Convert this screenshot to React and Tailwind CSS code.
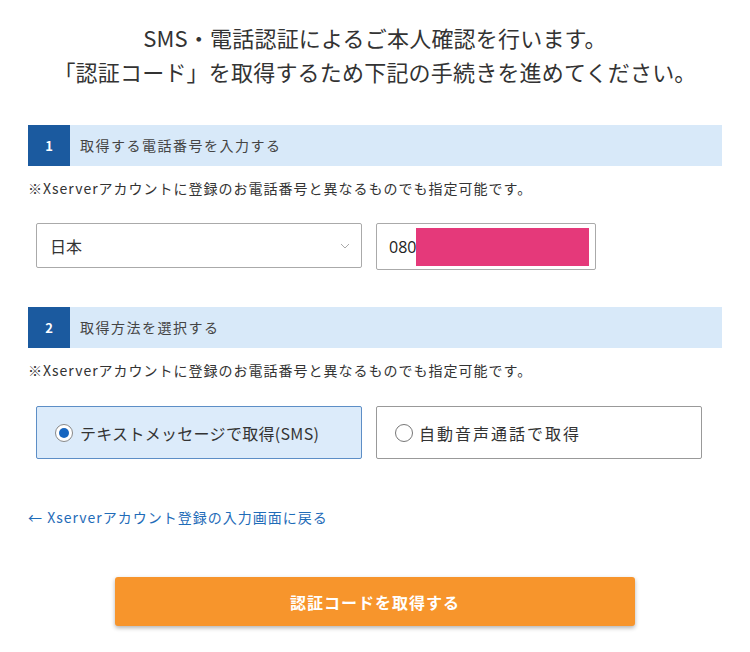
// App: SMS / phone verification step
import React, { useState } from 'react';

const FONT = { fontFamily: '"Noto Sans CJK JP", "Noto Sans", sans-serif' };

function StepHeader({ num, label }) {
  return (
    <div className="flex h-[41px] bg-[#d8e9f9]">
      <div className="flex w-[42px] items-center justify-center bg-[#1b5a9f] text-[13px] font-bold text-white">{num}</div>
      <div className="flex items-center pl-[10px] text-[14px] tracking-[1.5px] text-[#444]">{label}</div>
    </div>
  );
}

function Radio({ checked }) {
  return (
    <span className={`flex h-[18px] w-[18px] shrink-0 items-center justify-center rounded-full border ${checked ? 'border-[#888] bg-white' : 'border-[#777] bg-white'}`}>
      {checked && <span className="h-[10px] w-[10px] rounded-full bg-[#1766c0]" />}
    </span>
  );
}

export default function App() {
  const [method, setMethod] = useState('sms');

  return (
    <div className="w-[750px] h-[652px] bg-white text-[#333]" style={FONT}>
      <div className="pt-[20px] text-center text-[22px] leading-[34px] tracking-[0.2px] text-[#333]">
        <p>SMS・電話認証によるご本人確認を行います。</p>
        <p>「認証コード」を取得するため下記の手続きを進めてください。</p>
      </div>

      <div className="mx-[28px] mt-[37px]">
        <StepHeader num="1" label="取得する電話番号を入力する" />
        <p className="mt-[12px] text-[14px] leading-[20px] tracking-[1px] text-[#333]">※Xserverアカウントに登録のお電話番号と異なるものでも指定可能です。</p>

        <div className="mt-[25px] flex gap-[14px] pl-[8px]">
          <div className="flex h-[45px] w-[326px] items-center justify-between rounded-[2px] border border-[#aaa] pl-[13px] pr-[10px] text-[16px]">
            <span>日本</span>
            <svg width="12" height="8" viewBox="0 0 12 8" fill="none" stroke="#aaa" strokeWidth="1">
              <path d="M2 2l4 4 4-4" />
            </svg>
          </div>
          <div className="flex h-[47px] w-[220px] items-center rounded-[2px] border border-[#aaa] pl-[12px] pr-[6px]">
            <span className="text-[16px] text-[#222]" style={{ fontFamily: '"Open Sans", sans-serif' }}>080</span>
            <div className="h-[38px] flex-1 bg-[#e5397a]" />
          </div>
        </div>

        <div className="mt-[37px]">
          <StepHeader num="2" label="取得方法を選択する" />
        </div>
        <p className="mt-[12px] text-[14px] leading-[20px] tracking-[1px] text-[#333]">※Xserverアカウントに登録のお電話番号と異なるものでも指定可能です。</p>

        <div className="mt-[26px] flex gap-[14px] pl-[8px]">
          <button
            onClick={() => setMethod('sms')}
            className={`flex h-[53px] w-[326px] items-center gap-[7px] rounded-[2px] border pl-[18px] text-[16px] tracking-[0.3px] ${method === 'sms' ? 'border-[#5d8ec6] bg-[#dcebfa]' : 'border-[#999] bg-white'}`}
          >
            <Radio checked={method === 'sms'} />
            <span>テキストメッセージで取得(SMS)</span>
          </button>
          <button
            onClick={() => setMethod('voice')}
            className={`flex h-[53px] w-[326px] items-center gap-[6px] rounded-[2px] border pl-[18px] text-[16px] tracking-[2px] ${method === 'voice' ? 'border-[#5d8ec6] bg-[#dcebfa]' : 'border-[#999] bg-white'}`}
          >
            <Radio checked={method === 'voice'} />
            <span>自動音声通話で取得</span>
          </button>
        </div>

        <a href="#" className="mt-[48px] block text-[14px] leading-[20px] tracking-[1px] text-[#1f6cb8]">← Xserverアカウント登録の入力画面に戻る</a>

        <div className="mt-[50px] flex justify-center">
          <button className="h-[49px] w-[520px] rounded-[3px] bg-[#f7952c] text-[16px] font-bold tracking-[1px] text-white shadow-[0_2px_4px_rgba(0,0,0,0.3)]">
            認証コードを取得する
          </button>
        </div>
      </div>
    </div>
  );
}
